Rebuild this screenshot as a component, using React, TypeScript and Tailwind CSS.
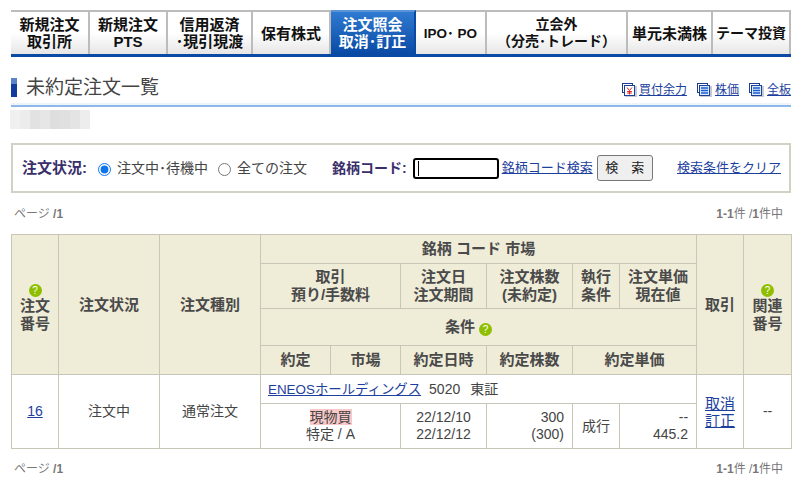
const FONT = "font-['Liberation_Sans','Noto_Sans_CJK_JP',sans-serif]";

const tabs = [
  { w: "w-[79px]", size: "text-[15px]", lines: ["新規注文", "取引所"] },
  { w: "w-[78px]", size: "text-[15px]", lines: ["新規注文", "PTS"] },
  { w: "w-[85px]", size: "text-[15px]", lines: ["信用返済", "･現引現渡"] },
  { w: "w-[78px]", size: "text-[15px]", lines: ["保有株式"] },
  { w: "w-[85px]", size: "text-[15px]", lines: ["注文照会", "取消･訂正"], active: true },
  { w: "w-[71px]", size: "text-[13.5px]", lines: ["IPO･ PO"] },
  { w: "w-[141px]", size: "text-[14px]", lines: ["立会外", "（分売･トレード）"] },
  { w: "w-[85px]", size: "text-[15px]", lines: ["単元未満株"] },
  { w: "w-[78px]", size: "text-[14px]", lines: ["テーマ投資"] },
];

// mosaic over the account name
const mosaic = ["bg-[#f0f0f0]", "bg-[#ececec]", "bg-[#e2e2e2]", "bg-[#e6e6e6]", "bg-[#dedede]", "bg-[#e0e0e0]", "bg-[#e4e4e4]", "bg-[#ededed]"];

function Help({ block }: { block?: boolean }) {
  return (
    <span className={`${block ? "mx-auto flex" : "inline-flex align-[-1px]"} h-[13px] w-[13px] items-center justify-center rounded-full bg-[#8fbe00] text-[10px] leading-none font-normal text-white`}>
      ?
    </span>
  );
}

function WinIcon({ yen }: { yen?: boolean }) {
  return (
    <svg width="15" height="14" viewBox="0 0 15 14" className="shrink-0">
      <rect x="3" y="3" width="12" height="11" fill="#c4cbd6" />
      <rect x="0.5" y="0.5" width="10" height="9" fill="#fff" stroke="#1a3f95" />
      <rect x="2.5" y="2.5" width="10" height="10" fill={yen ? "#fff" : "#dce8fb"} stroke="#1a3f95" />
      {yen ? (
        <path d="M5 4.5l2.5 3 2.5-3M7.5 7.5v4M5.2 8.5h4.6M5.2 10h4.6" stroke="#e0201b" fill="none" />
      ) : (
        <path d="M4 5h7M4 7.5h7M4 10h7" stroke="#1a5fd0" strokeWidth="1.3" fill="none" />
      )}
    </svg>
  );
}

const th = "border border-[#c8c6b6] bg-[#efecd8] p-0 text-center align-middle text-[15px] leading-[18px] font-bold text-[#4a4a4a]";
const td = "border border-[#c8c6b6] bg-white p-0 text-center align-middle text-[14px] leading-[17px] font-normal text-[#444]";
const link = "text-[#1d3f9e] underline";

function Pager({ className }: { className: string }) {
  return (
    <div className={`flex items-center justify-between pr-[8px] pl-[3px] text-[12px] text-[#777] ${className}`}>
      <span>ページ <b className="font-bold">/1</b></span>
      <span><b className="font-bold">1-1</b>件 /<b className="font-bold">1</b>件中</span>
    </div>
  );
}

export default function App() {
  return (
    <div className={`${FONT} h-[482px] w-[800px] overflow-hidden bg-white pt-[10px] pr-[9px] pl-[11px]`}>
      <nav className="flex h-[47px] border-b-[3px] border-[#0a4aa5]">
        {tabs.map((t) => (
          <div
            key={t.lines[0] + t.lines[1]}
            className={`flex h-[44px] ${t.w} ${t.size} flex-col items-center justify-center border-t-2 border-r-2 leading-[17px] font-bold ${
              t.active
                ? "border-t-[#5b93d8] border-r-[#0a4aa5] bg-gradient-to-b from-[#2f7ad0] to-[#0a4aa5] text-white"
                : "border-[#bcbcbc] bg-gradient-to-b from-white via-white to-[#e6e6e6] text-[#111]"
            }`}
          >
            {t.lines.map((l) => (
              <span key={l} className="whitespace-nowrap">{l}</span>
            ))}
          </div>
        ))}
      </nav>

      <div className="mt-[21px] flex h-[29px] items-start justify-between border-b-2 border-[#8fb8e8] shadow-[inset_0_-2px_0_#eef4fb]">
        <div className="flex items-center">
          <span className="h-[19px] w-[6px] bg-gradient-to-b from-[#5b83c8] from-30% to-[#123c9c] to-30%" />
          <h1 className="ml-[9px] text-[19px] leading-[19px] font-normal text-[#444]">未約定注文一覧</h1>
        </div>
        <div className="mt-[5px] flex items-center text-[12px] leading-[14px]">
          <WinIcon yen />
          <a className={`${link} ml-[2px]`}>買付余力</a>
          <span className="ml-[10px]"><WinIcon /></span>
          <a className={`${link} ml-[3px]`}>株価</a>
          <span className="ml-[10px]"><WinIcon /></span>
          <a className={`${link} ml-[3px]`}>全板</a>
        </div>
      </div>

      <div className="mt-[3px] ml-[-1px] flex h-[19px] w-[80px]">
        {mosaic.map((c) => (
          <span key={c} className={`h-full w-[10px] ${c}`} />
        ))}
      </div>

      <div className="mt-[14px] flex h-[50px] items-center border-2 border-[#d3d1c4] pr-[8px] pl-[9px] text-[14px] text-[#444]">
        <b className="text-[15px] font-bold whitespace-nowrap text-[#3a2f6b]">注文状況:</b>
        <input type="radio" name="st" defaultChecked className="mt-[2px] ml-[11px] h-[13px] w-[13px] accent-[#0f75ee]" />
        <span className="ml-[6px] whitespace-nowrap">注文中･待機中</span>
        <input type="radio" name="st" className="mt-[2px] ml-[10px] h-[13px] w-[13px]" />
        <span className="ml-[6px] whitespace-nowrap">全ての注文</span>
        <b className="ml-[25px] font-bold whitespace-nowrap text-[#3a2f6b]">銘柄コード:</b>
        <span className="ml-[6px] flex h-[21px] w-[86px] items-center rounded-[3px] border-2 border-black pl-[3px]">
          <span className="h-[15px] w-px bg-black" />
        </span>
        <a className={`${link} ml-[3px] text-[13px] whitespace-nowrap`}>銘柄コード検索</a>
        <button className="ml-[4px] h-[26px] w-[56px] rounded-[3px] border border-[#777] bg-[#efefef] text-[13px] text-[#222]">検　索</button>
        <a className={`${link} ml-auto text-[13px] whitespace-nowrap`}>検索条件をクリア</a>
      </div>

      <Pager className="mt-[12px] h-[18px]" />

      <table className="mt-[11px] w-[780px] table-fixed border-collapse">
        <colgroup>
          <col className="w-[47px]" />
          <col className="w-[101px]" />
          <col className="w-[101px]" />
          <col className="w-[70px]" />
          <col className="w-[70px]" />
          <col className="w-[86px]" />
          <col className="w-[86px]" />
          <col className="w-[47px]" />
          <col className="w-[77px]" />
          <col className="w-[47px]" />
          <col className="w-[48px]" />
        </colgroup>
        <thead>
          <tr className="h-[29px]">
            <th rowSpan={4} className={`${th} pt-[8px] leading-[17px]`}><Help block />注文<br />番号</th>
            <th rowSpan={4} className={th}>注文状況</th>
            <th rowSpan={4} className={th}>注文種別</th>
            <th colSpan={6} className={th}>銘柄&nbsp;コード&nbsp;市場</th>
            <th rowSpan={4} className={th}>取引</th>
            <th rowSpan={4} className={`${th} pt-[8px] leading-[17px]`}><Help block />関連<br />番号</th>
          </tr>
          <tr className="h-[45px]">
            <th colSpan={2} className={th}>取引<br />預り/手数料</th>
            <th className={th}>注文日<br />注文期間</th>
            <th className={th}>注文株数<br />(未約定)</th>
            <th className={th}>執行<br />条件</th>
            <th className={th}>注文単価<br />現在値</th>
          </tr>
          <tr className="h-[37px]">
            <th colSpan={6} className={`${th} pr-[20px]`}>条件 <Help /></th>
          </tr>
          <tr className="h-[29px]">
            <th className={th}>約定</th>
            <th className={th}>市場</th>
            <th className={th}>約定日時</th>
            <th className={th}>約定株数</th>
            <th colSpan={2} className={th}>約定単価</th>
          </tr>
        </thead>
        <tbody>
          <tr className="h-[29px]">
            <td rowSpan={2} className={td}><a className={link}>16</a></td>
            <td rowSpan={2} className={td}>注文中</td>
            <td rowSpan={2} className={td}>通常注文</td>
            <td colSpan={6} className={`${td} pl-[7px] text-left`}>
              <a className={`${link} text-[13.4px]`}>ENEOSホールディングス</a>
              <span className="ml-[8px]">5020</span>
              <span className="ml-[10px]">東証</span>
            </td>
            <td rowSpan={2} className={`${td} text-[15px]`}><a className={link}>取消</a><br /><a className={link}>訂正</a></td>
            <td rowSpan={2} className={td}>--</td>
          </tr>
          <tr className="h-[45px]">
            <td colSpan={2} className={td}><span className="bg-[#f9c8c8]">現物買</span><br />特定 / A</td>
            <td className={td}>22/12/10<br />22/12/12</td>
            <td className={`${td} pr-[8px] text-right`}>300<br />(300)</td>
            <td className={td}>成行</td>
            <td className={`${td} pr-[8px] text-right`}>--<br />445.2</td>
          </tr>
        </tbody>
      </table>

      <Pager className="mt-[11px] h-[18px]" />
    </div>
  );
}
